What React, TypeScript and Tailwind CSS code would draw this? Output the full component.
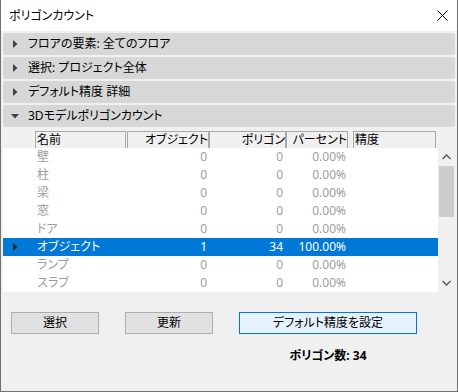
import React from "react";

const rows = [
  { name: "壁", obj: "0", poly: "0", pct: "0.00%" },
  { name: "柱", obj: "0", poly: "0", pct: "0.00%" },
  { name: "梁", obj: "0", poly: "0", pct: "0.00%" },
  { name: "窓", obj: "0", poly: "0", pct: "0.00%" },
  { name: "ドア", obj: "0", poly: "0", pct: "0.00%" },
  { name: "オブジェクト", obj: "1", poly: "34", pct: "100.00%", sel: true },
  { name: "ランプ", obj: "0", poly: "0", pct: "0.00%" },
  { name: "スラブ", obj: "0", poly: "0", pct: "0.00%" },
];

function RightTri({ color = "#404040" }: { color?: string }) {
  return (
    <svg width="5" height="8" viewBox="0 0 5 8">
      <path d="M0 0 L4.5 4 L0 8 Z" fill={color} />
    </svg>
  );
}

function DownTri() {
  return (
    <svg width="8" height="5" viewBox="0 0 8 5">
      <path d="M0 0 L8 0 L4 4.5 Z" fill="#404040" />
    </svg>
  );
}

function Section({ label, open }: { label: string; open?: boolean }) {
  return (
    <div className="h-[22px] rounded-[3px] bg-[#d7d7d7] flex items-center">
      <div className={open ? "w-[25px] flex items-center pl-[8px]" : "w-[25px] flex items-center pl-[10px]"}>
        {open ? <DownTri /> : <RightTri />}
      </div>
      <span className="text-[12px] leading-[14px] text-black">{label}</span>
    </div>
  );
}

export default function App() {
  return (
    <div className="w-[458px] h-[392px] bg-[#f0f0f0] border-x border-b border-[#707070] flex flex-col font-['Noto_Sans','Noto_Sans_CJK_JP',sans-serif] [font-feature-settings:'palt'] text-[12px] overflow-hidden">
      {/* Title bar */}
      <div className="h-[31px] bg-white flex items-center justify-between pl-[8px] pr-[9px] shrink-0">
        <span className="text-[12px] leading-[14px] text-black pt-[1px]">ポリゴンカウント</span>
        <svg width="11" height="11" viewBox="0 0 11 11">
          <path d="M0.5 0.5 L10.5 10.5 M10.5 0.5 L0.5 10.5" stroke="#000" strokeWidth="1" />
        </svg>
      </div>

      {/* Sections */}
      <div className="px-[2px] pt-[2px] flex flex-col gap-[2px]">
        <Section label="フロアの要素: 全てのフロア" />
        <Section label="選択: プロジェクト全体" />
        <Section label="デフォルト精度 詳細" />
        <Section label="3Dモデルポリゴンカウント" open />
      </div>

      {/* Grid */}
      <div className="pl-[2px] pr-[2px] mt-[4px] flex flex-col">
        {/* Header row */}
        <div className="h-[17px] flex pl-[32px] text-black">
          <div className="w-[91px] border border-b-0 border-[#a9a9a9] pl-[1px] leading-[15px]">名前</div>
          <div className="ml-[1px] w-[82px] border border-b-0 border-[#a9a9a9] text-right leading-[15px]">オブジェクト</div>
          <div className="w-[77px] border border-b-0 border-[#a9a9a9] text-right leading-[15px]">ポリゴン</div>
          <div className="w-[62px] border border-b-0 border-[#a9a9a9] text-right leading-[15px]">パーセント</div>
          <div className="ml-[5px] w-[83px] border border-b-0 border-[#a9a9a9] pl-[1px] leading-[15px]">精度</div>
        </div>
        {/* Body */}
        <div className="flex">
          <div className="w-[436px] bg-white flex flex-col">
            {rows.map((r) => (
              <div
                key={r.name}
                className={
                  r.sel
                    ? "h-[18px] flex items-center bg-[#0078d7] text-white"
                    : "h-[18px] flex items-center text-[#9d9d9d]"
                }
              >
                <div className="w-[32px] flex items-center pl-[10px]">
                  {r.sel ? <RightTri color="#2b2b2b" /> : null}
                </div>
                <div className="w-[91px] pl-[2px] leading-[14px]">{r.name}</div>
                <div className="ml-[1px] w-[82px] text-right pr-[2px] leading-[14px]">{r.obj}</div>
                <div className="w-[77px] text-right pr-[3px] leading-[14px]">{r.poly}</div>
                <div className="w-[62px] text-right pr-[2px] leading-[14px]">{r.pct}</div>
              </div>
            ))}
          </div>
          {/* Scrollbar */}
          <div className="w-[17px] h-[144px] flex flex-col items-center bg-[#f0f0f0]">
            <div className="h-[18px] flex items-center justify-center">
              <svg width="9" height="6" viewBox="0 0 9 6">
                <path d="M0.5 5 L4.5 1 L8.5 5" stroke="#606060" strokeWidth="1.5" fill="none" />
              </svg>
            </div>
            <div className="w-[15px] h-[51px] bg-[#cdcdcd]" />
            <div className="flex-1" />
            <div className="h-[18px] flex items-center justify-center">
              <svg width="9" height="6" viewBox="0 0 9 6">
                <path d="M0.5 1 L4.5 5 L8.5 1" stroke="#606060" strokeWidth="1.5" fill="none" />
              </svg>
            </div>
          </div>
        </div>
      </div>

      {/* Buttons */}
      <div className="flex mt-[20px] pl-[10px]">
        <button className="w-[88px] h-[22px] border border-[#adadad] bg-[#e1e1e1] text-black text-[12px] leading-[14px]">選択</button>
        <button className="ml-[26px] w-[88px] h-[22px] border border-[#adadad] bg-[#e1e1e1] text-black text-[12px] leading-[14px]">更新</button>
        <button className="ml-[26px] w-[178px] h-[22px] border border-[#0078d7] bg-[#e5f1fb] text-black text-[12px] leading-[14px]">デフォルト精度を設定</button>
      </div>

      <div className="flex pl-[238px] mt-[15px]">
        <div className="w-[178px] text-center font-bold text-black leading-[14px]">ポリゴン数: 34</div>
      </div>
    </div>
  );
}
